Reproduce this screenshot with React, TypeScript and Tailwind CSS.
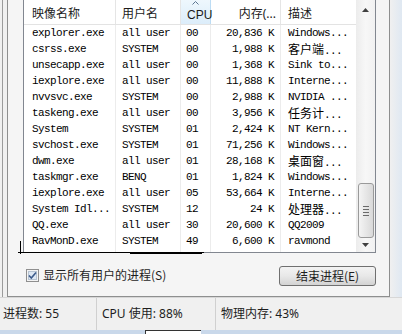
import React from "react";

const ROWS: [string, string, string, string, string][] = [
  ["explorer.exe", "all user", "00", "20,836 K", "Windows..."],
  ["csrss.exe", "SYSTEM", "00", "1,988 K", "客户端..."],
  ["unsecapp.exe", "all user", "00", "1,368 K", "Sink to..."],
  ["iexplore.exe", "all user", "00", "11,888 K", "Interne..."],
  ["nvvsvc.exe", "SYSTEM", "00", "2,988 K", "NVIDIA ..."],
  ["taskeng.exe", "all user", "00", "3,956 K", "任务计..."],
  ["System", "SYSTEM", "01", "2,424 K", "NT Kern..."],
  ["svchost.exe", "SYSTEM", "01", "71,256 K", "Windows..."],
  ["dwm.exe", "all user", "01", "28,168 K", "桌面窗..."],
  ["taskmgr.exe", "BENQ", "01", "1,824 K", "Windows..."],
  ["iexplore.exe", "all user", "05", "53,664 K", "Interne..."],
  ["System Idl...", "SYSTEM", "12", "24 K", "处理器..."],
  ["QQ.exe", "all user", "30", "20,600 K", "QQ2009"],
  ["RavMonD.exe", "SYSTEM", "49", "6,600 K", "ravmond"],
];

// cjk runs get a wider font, the rest stays in the mono cell font
function Cell({ text }: { text: string }) {
  const parts = text.split(/([\u4e00-\u9fff]+)/).filter(Boolean);
  return (
    <>
      {parts.map((p, i) =>
        /[\u4e00-\u9fff]/.test(p) ? (
          <span key={i} className="text-[12px] tracking-normal font-['Noto_Sans_CJK_SC',sans-serif]">
            {p}
          </span>
        ) : (
          <span key={i}>{p}</span>
        )
      )}
    </>
  );
}

function Header() {
  return (
    <div className="flex h-[25px] border-b border-[#e3e3e3] bg-white text-[12px] text-[#1b1b1b]">
      <div className="w-[92px] border-r border-[#e5e5e5] pl-[8px] pt-[5px]">映像名称</div>
      <div className="w-[65px] border-r border-[#e5e5e5] pl-[6px] pt-[5px]">用户名</div>
      <div className="relative w-[30px] border-r border-[#bcdcf4] bg-gradient-to-b from-[#eef7fd] to-[#dcedfa] pl-[6px] pt-[5px] font-['Liberation_Sans',sans-serif] text-[12px]">
        <svg className="absolute left-[11px] top-[1px]" width="7" height="4" viewBox="0 0 7 4">
          <path d="M0.5 3.5 L3.5 0.5 L6.5 3.5" fill="none" stroke="#5a7591" strokeWidth="1" />
        </svg>
        <span className="relative top-[1px]">CPU</span>
      </div>
      <div className="w-[70px] border-r border-[#e5e5e5] pr-[4px] pt-[5px] text-right">内存(...</div>
      <div className="flex-1 pl-[7px] pt-[5px]">描述</div>
    </div>
  );
}

function Scrollbar() {
  return (
    <div className="flex w-[19px] flex-col items-center bg-gradient-to-r from-[#ececec] via-[#f7f7f7] to-[#f1f1f1]">
      <div className="flex h-[19px] w-full items-center justify-center pt-[1px]">
        <svg width="7" height="4" viewBox="0 0 7 4">
          <path d="M3.5 0 L7 4 L0 4 Z" fill="#404040" />
        </svg>
      </div>
      <div className="h-[164px]" />
      <div className="flex h-[55px] w-[16px] items-center justify-center rounded-[3px] border border-[#9a9a9a] bg-gradient-to-r from-[#f4f4f4] to-[#d9d9d9]">
        <div className="flex flex-col gap-[2px]">
          <div className="h-px w-[6px] bg-[#6a6a6a]" />
          <div className="h-px w-[6px] bg-[#6a6a6a]" />
          <div className="h-px w-[6px] bg-[#6a6a6a]" />
          <div className="h-px w-[6px] bg-[#6a6a6a]" />
        </div>
      </div>
      <div className="flex flex-1 items-center justify-center pb-[1px]">
        <svg width="7" height="4" viewBox="0 0 7 4">
          <path d="M0 0 L7 0 L3.5 4 Z" fill="#404040" />
        </svg>
      </div>
    </div>
  );
}

function ProcessList() {
  return (
    <div className="flex h-[253px] w-[353px] border-x border-b border-[#828790] bg-white">
      <div className="flex flex-1 flex-col">
        <Header />
        <div className="relative flex-1 font-['Liberation_Mono',monospace] text-[11px] tracking-[-0.6px] text-black">
          {ROWS.map((r, i) => (
            <div key={i} className="flex h-[16px] items-center leading-[16px]">
              <div className="h-full w-[92px] border-r border-[#ececec] pl-[8px] whitespace-nowrap">{r[0]}</div>
              <div className="h-full w-[65px] border-r border-[#ececec] pl-[6px] whitespace-nowrap">{r[1]}</div>
              <div className="h-full w-[30px] border-r border-[#ececec] pl-[5px]">{r[2]}</div>
              <div className="h-full w-[70px] border-r border-[#ececec] pr-[6px] text-right whitespace-nowrap">{r[3]}</div>
              <div className="h-full flex-1 pl-[7px] whitespace-nowrap">
                <Cell text={r[4]} />
              </div>
            </div>
          ))}
          <div className="flex h-[3px]">
            <div className="w-[92px] border-r border-[#ececec]" />
            <div className="w-[65px] border-r border-[#ececec]" />
            <div className="w-[30px] border-r border-[#ececec]" />
            <div className="w-[70px] border-r border-[#ececec]" />
          </div>
        </div>
      </div>
      <Scrollbar />
    </div>
  );
}

function Checkbox() {
  return (
    <svg width="13" height="13" viewBox="0 0 13 13">
      <rect x="0.5" y="0.5" width="12" height="12" fill="#f4f4f4" stroke="#8f8f8f" />
      <rect x="2.5" y="2.5" width="8" height="8" fill="#dde7f3" stroke="#b6c3d2" />
      <path d="M3 6.5 L5.3 9 L10 3.5" fill="none" stroke="#3b5a8a" strokeWidth="1.6" />
    </svg>
  );
}

export default function App() {
  return (
    <div className="relative h-[334px] w-[402px] overflow-hidden bg-[#f0f0f0] font-['Noto_Sans','Noto_Sans_CJK_SC',sans-serif] text-[12px] text-[#1e1e1e]">
      <div className="flex h-[297px]">
        {/* window frame left */}
        <div className="w-[7px] pl-[2px]">
          <div className="h-full w-px bg-[#9b9b9b]" />
        </div>

        {/* tab page */}
        <div className="flex w-[383px] flex-col border-x border-b border-[#8e8f8f] bg-[#f5f5f5] pl-[15px]">
          <ProcessList />
          <div className="flex items-start pt-[13px]">
            <div className="flex items-center gap-[4px] pl-[3px] pt-[2px]">
              <Checkbox />
              <span className="font-['Noto_Sans_CJK_SC',sans-serif] leading-[14px]">显示所有用户的进程(S)</span>
            </div>
            <div className="ml-auto mr-[13px] flex h-[20px] w-[97px] items-center justify-center rounded-[3px] border border-[#707070] bg-gradient-to-b from-[#f3f3f3] via-[#e8e8e8] to-[#d3d3d3] font-['Noto_Sans_CJK_SC',sans-serif] leading-[14px]">
              结束进程(E)
            </div>
          </div>
        </div>

        {/* window frame right */}
        <div className="flex-1 bg-gradient-to-r from-[#f0f0f0] to-[#dfe8f2]" />
      </div>

      {/* status bar */}
      <div className="flex h-[33px] items-center border-t border-[#d7d7d7] bg-[#f0f0f0]">
        <div className="flex h-full w-[97px] items-center border-r border-[#d0d0d0] pl-[3px]">进程数: 55</div>
        <div className="flex h-full w-[119px] items-center border-r border-[#d0d0d0] pl-[5px]">CPU 使用: 88%</div>
        <div className="flex h-full flex-1 items-center pl-[5px]">物理内存: 43%</div>
      </div>
      <div className="h-[4px] bg-[#c9d8ea]" />

      {/* bit of the next window peeking in at the bottom */}
      <div className="absolute left-[145px] top-[330px] h-[4px] w-[56px] border-l border-t border-[#333] bg-white" />

      {/* pen marks drawn over the screenshot */}
      <div className="absolute left-[20px] top-[241px] h-[13px] w-px bg-black" />
      <div className="absolute left-[18px] top-[252px] h-px w-[186px] bg-black" />
      <div className="absolute left-[130px] top-[252px] h-[2px] w-[72px] bg-black" />
    </div>
  );
}
